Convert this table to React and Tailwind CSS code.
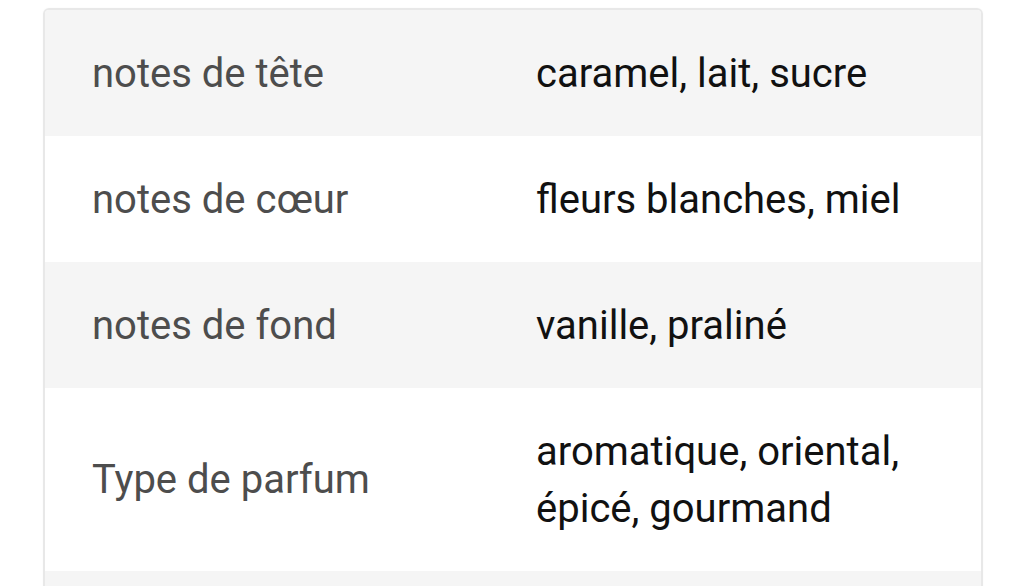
const ROWS = [
    { label: 'notes de tête', value: ['caramel, lait, sucre'] },
    { label: 'notes de cœur', value: ['fleurs blanches, miel'] },
    { label: 'notes de fond', value: ['vanille, praliné'] },
    { label: 'Type de parfum', value: ['aromatique, oriental,', 'épicé, gourmand'] },
    { label: '\u00a0', value: ['\u00a0'] },
];

function Row({ row, shaded }) {
    return (
        <div className={`grid grid-cols-[491px_1fr] items-center py-[34.5px] ${shaded ? 'bg-[#f5f5f5]' : 'bg-white'}`}>
            <div className="pl-[47px] text-[#4d4d4d]">{row.label}</div>
            <div className="text-[#111111]">
                {row.value.map((line, i) => <div key={i}>{line}</div>)}
            </div>
        </div>
    );
}

export default function App() {
    return (
        <div className="h-[586px] overflow-hidden bg-white pt-[8px] pl-[43px]"
            style={{ fontFamily: 'Roboto, "Noto Sans", sans-serif' }}>
            <div className="w-[940px] rounded-[6px] border-2 border-[#e8e8e8] overflow-hidden text-[40px] leading-[57px] shadow-[0_0_2px_rgba(0,0,0,0.04)]">
                {ROWS.map((r, i) => <Row key={i} row={r} shaded={i % 2 === 0} />)}
            </div>
        </div>
    );
}
